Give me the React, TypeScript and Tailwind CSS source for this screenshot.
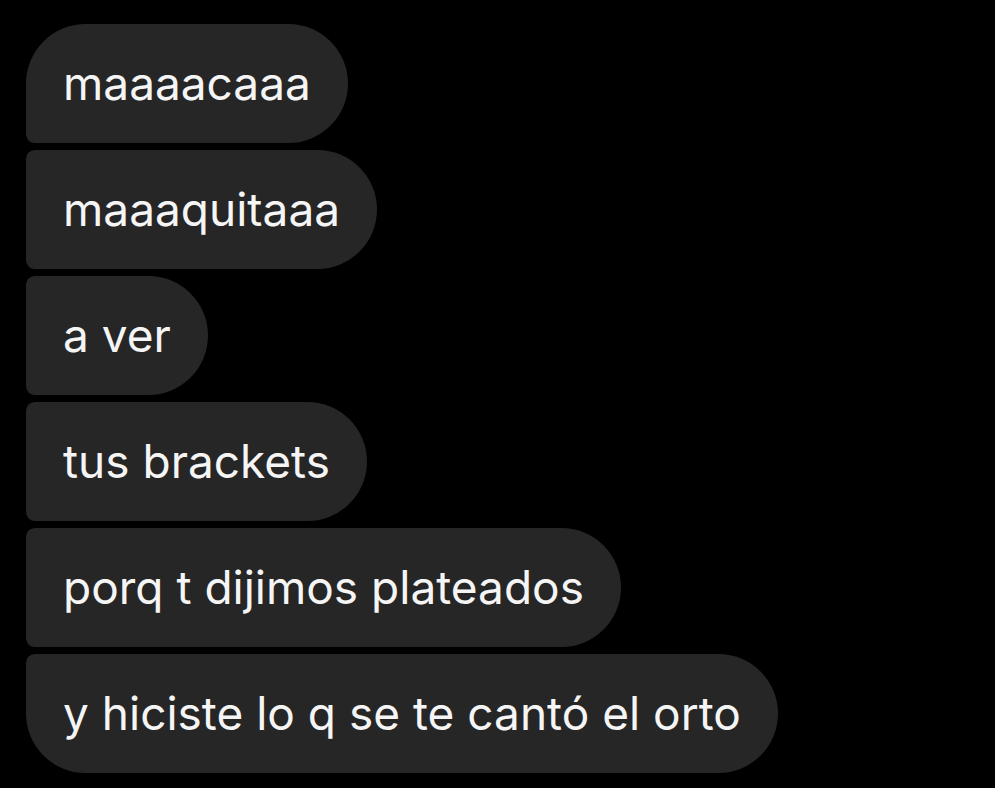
const messages = [
    "maaaacaaa",
    "maaaquitaaa",
    "a ver",
    "tus brackets",
    "porq t dijimos plateados",
    "y hiciste lo q se te cantó el orto",
];

const Bubble = ({text, first, last}: { text: string; first: boolean; last: boolean }) => {
    const corners = first
        ? "rounded-r-[60px] rounded-tl-[60px] rounded-bl-[9px]"
        : last
            ? "rounded-r-[60px] rounded-bl-[60px] rounded-tl-[9px]"
            : "rounded-r-[60px] rounded-l-[9px]";
    return (
        <div className={`h-[119px] px-[37px] flex items-center bg-[#262626] text-[#f5f5f5] text-[46px] ${corners}`}>
            <span className="leading-none -mt-[2px]">{text}</span>
        </div>
    );
};

export default function App() {
    return (
        <div className="w-[995px] h-[788px] bg-black pt-[24px] pl-[26px] overflow-hidden"
             style={{fontFamily: "Inter, 'Liberation Sans', sans-serif"}}>
            <div className="flex flex-col items-start gap-[7px]">
                {messages.map((m, i) => (
                    <Bubble key={i} text={m} first={i === 0} last={i === messages.length - 1}/>
                ))}
            </div>
        </div>
    );
}
